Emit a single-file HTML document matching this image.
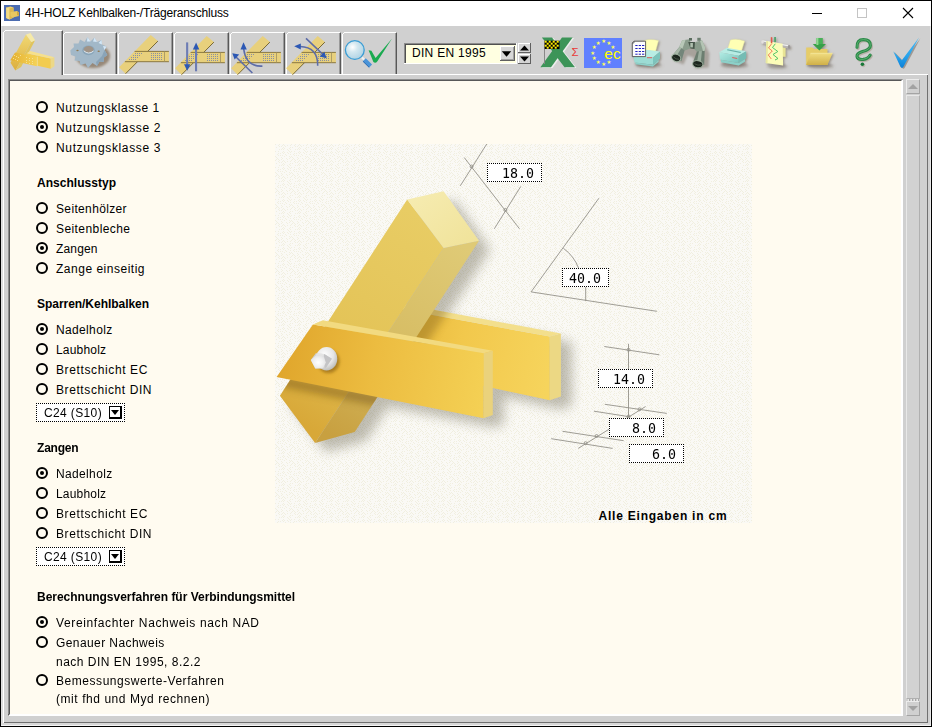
<!DOCTYPE html>
<html lang="de">
<head>
<meta charset="utf-8">
<title>4H-HOLZ Kehlbalken-/Trägeranschluss</title>
<style>
html,body{margin:0;padding:0;}
body{width:932px;height:727px;position:relative;overflow:hidden;background:#d0d0d0;font-family:"Liberation Sans",sans-serif;font-size:12px;color:#000;}
.abs{position:absolute;}
#frame{position:absolute;left:0;top:0;width:930px;height:725px;border:1px solid #000;border-right:1px solid #000;border-bottom:1px solid #000;pointer-events:none;z-index:50;}
#title{position:absolute;left:1px;top:1px;width:930px;height:25px;background:#fff;}
#title .txt{position:absolute;left:24px;top:4px;font-size:12px;line-height:16px;letter-spacing:-0.17px;white-space:nowrap;color:#000;}
/* tab control */
.tab{position:absolute;top:32px;height:41px;width:54px;border-left:1px solid #fff;border-top:1px solid #fff;border-right:1px solid #585858;box-sizing:content-box;padding-right:1px;}
.tab::after{content:"";position:absolute;right:0;top:0;width:1px;height:100%;background:#9a9a9a;}
.tab::before{content:"";position:absolute;left:-1px;top:-1px;width:1px;height:1px;background:#d0d0d0;box-shadow:1px 0 #d0d0d0,0 1px #d0d0d0,1px 1px #fff;}
.tab.act{top:30px;height:44px;left:3px;width:57px;background:#d0d0d0;z-index:3;}
#pagetop{position:absolute;left:63px;top:74px;width:865px;height:1px;background:#fff;}
#pageleft{position:absolute;left:3px;top:74px;width:1px;height:649px;background:#fff;}
#pageright{position:absolute;left:927px;top:75px;width:1px;height:648px;background:#707070;}
#pagebottom{position:absolute;left:4px;top:722px;width:924px;height:1px;background:#707070;}
#hl-r{position:absolute;left:930px;top:26px;width:1px;height:700px;background:#e8e8e8;}
#hl-b{position:absolute;left:1px;top:725px;width:930px;height:1px;background:#f4f4f4;}
#hl-l{position:absolute;left:1px;top:26px;width:1px;height:699px;background:#dedede;}
/* content */
#content{position:absolute;left:8px;top:79px;width:891px;height:633px;background:#fffbf0;border-top:2px solid #585858;border-left:2px solid #585858;border-right:2px solid #fff;border-bottom:2px solid #fff;box-sizing:content-box;}
#content::before{content:"";position:absolute;left:-2px;top:-2px;width:894px;height:1px;background:#8c8c8c;}
#content::after{content:"";position:absolute;left:-2px;top:-2px;width:1px;height:635px;background:#8c8c8c;}
.t{position:absolute;left:56px;white-space:nowrap;font-size:12px;line-height:14px;letter-spacing:0.9px;color:#000;}
.h{position:absolute;left:37px;white-space:nowrap;font-size:12px;line-height:14px;font-weight:bold;letter-spacing:0.15px;color:#000;}
.r{position:absolute;left:36px;width:8px;height:8px;border:2px solid #000;border-radius:50%;box-sizing:content-box;}
.r.on::after{content:"";position:absolute;left:2px;top:2px;width:4px;height:4px;border-radius:50%;background:#000;}

.dd{position:absolute;left:36px;width:87px;height:17px;border:1px dotted #000;background:#fff;box-sizing:content-box;}
.dd span{position:absolute;left:6.5px;top:1.5px;font-size:12px;line-height:14px;letter-spacing:0.37px;white-space:nowrap;will-change:transform;}
.dd i{position:absolute;left:72px;top:2px;width:10px;height:10px;border:1px solid #000;border-right-width:2px;border-bottom-width:2px;background:#fff;}
.dd i::after{content:"";position:absolute;left:1px;top:3px;border-left:4px solid transparent;border-right:4px solid transparent;border-top:5px solid #000;}
.inp{position:absolute;height:17px;border:1px dotted #000;background:#fff;box-sizing:content-box;font-family:"DejaVu Sans Mono","Liberation Mono",monospace;font-size:13.3px;line-height:17px;text-align:right;white-space:nowrap;}
.inp span{position:absolute;right:7px;top:0.5px;will-change:transform;}

.sbb{position:absolute;left:906px;width:12px;height:13px;background:#d0d0d0;border-top:1px solid #ececec;border-left:1px solid #ececec;border-right:1px solid #a4a4a4;border-bottom:1px solid #a4a4a4;}
.sbb i{position:absolute;left:1px;width:0;height:0;border-left:5px solid transparent;border-right:5px solid transparent;}
#sbt{position:absolute;left:906px;top:95px;width:12px;height:602px;background:#d2d2d2;border-left:1px solid #e8e8e8;border-right:1px solid #b0b0b0;border-top:1px solid #e8e8e8;border-bottom:1px solid #b0b0b0;}
</style>
</head>
<body>
<div id="title">
<svg class="abs" style="left:3px;top:4px" width="16" height="16" viewBox="0 0 16 16"><rect width="16" height="16" fill="#4c6cb0"/><polygon points="2.2,2.5 6.5,1.5 9.5,2.5 9.5,12.5 5.5,14.5 2.2,13" fill="#ecd070"/><polygon points="2.2,2.5 5.5,3.5 5.5,14.5 2.2,13" fill="#f4dc84"/><polygon points="5.5,3.5 9.5,2.5 9.5,12.5 5.5,14.5" fill="#dcb850"/><polygon points="6.5,7 13,6 15,7.5 15,11 8.5,12.5 6.5,11" fill="#e8c860"/><polygon points="13,6 15,7.5 15,11 13,10" fill="#d0a840"/></svg>
  <svg class="abs" style="left:780px;top:0px" width="150" height="25" viewBox="781 1 150 25"><path d="M812 13.5 H822" stroke="#000" stroke-width="1"/><rect x="857.5" y="8.5" width="9" height="9" fill="none" stroke="#c4c4c4" stroke-width="1"/><path d="M903 8 L913 18 M913 8 L903 18" stroke="#000" stroke-width="1.1"/></svg>
  <div class="txt">4H-HOLZ Kehlbalken-/Trägeranschluss</div>
</div>
<div id="toolbar"></div>
<div id="pagetop"></div><div id="pageleft"></div><div id="pageright"></div><div id="pagebottom"></div>
<div class="abs" style="left:2px;top:32px;width:1px;height:691px;background:#dcdcdc"></div><div class="abs" style="left:1px;top:723px;width:929px;height:2px;background:#d8d8d8"></div><div id="hl-r"></div><div id="hl-b"></div><div id="hl-l"></div>
<div class="tab act"></div>
<div class="tab" style="left:63px;width:51px"></div>
<div class="tab" style="left:118px;width:52px"></div>
<div class="tab" style="left:174px;width:52px"></div>
<div class="tab" style="left:230px;width:52px"></div>
<div class="tab" style="left:286px;width:52px"></div>
<div class="tab" style="left:342px;width:52px"></div>
<div id="content"></div>
<div class="sbb" style="top:79px"><i style="top:3.6px;border-bottom:5.6px solid #a2a2a2"></i></div>
<div id="sbt"></div>
<svg class="abs" style="left:906px;top:699px" width="14" height="2" viewBox="0 0 14 2"><g fill="#e8e8e8"><rect x="2" y="0" width="1" height="2"/><rect x="5" y="0" width="1" height="2"/><rect x="8" y="0" width="1" height="2"/><rect x="11" y="0" width="1" height="2"/></g><g fill="#a8a8a8"><rect x="3" y="0" width="1" height="2"/><rect x="6" y="0" width="1" height="2"/><rect x="9" y="0" width="1" height="2"/><rect x="12" y="0" width="1" height="2"/></g></svg>
<div class="sbb" style="top:701px"><i style="top:4px;border-top:5.6px solid #a2a2a2"></i></div>
<div id="panel" class="abs" style="left:0;top:0;width:932px;height:727px;">
<!--PANEL-->
<div class="r" style="top:101px"></div><div class="t" style="top:101px;letter-spacing:0.57px">Nutzungsklasse 1</div>
<div class="r on" style="top:121px"></div><div class="t" style="top:121px;letter-spacing:0.65px">Nutzungsklasse 2</div>
<div class="r" style="top:141px"></div><div class="t" style="top:141px;letter-spacing:0.65px">Nutzungsklasse 3</div>
<div class="h" style="top:176px;letter-spacing:0.04px">Anschlusstyp</div>
<div class="r" style="top:202px"></div><div class="t" style="top:202px;letter-spacing:0.35px">Seitenhölzer</div>
<div class="r" style="top:222px"></div><div class="t" style="top:222px;letter-spacing:0.42px">Seitenbleche</div>
<div class="r on" style="top:242px"></div><div class="t" style="top:242px;letter-spacing:0.16px">Zangen</div>
<div class="r" style="top:262px"></div><div class="t" style="top:262px;letter-spacing:0.51px">Zange einseitig</div>
<div class="h" style="top:297px;letter-spacing:-0.04px">Sparren/Kehlbalken</div>
<div class="r on" style="top:323px"></div><div class="t" style="top:323px;letter-spacing:0.35px">Nadelholz</div>
<div class="r" style="top:343px"></div><div class="t" style="top:343px;letter-spacing:0.2px">Laubholz</div>
<div class="r" style="top:363px"></div><div class="t" style="top:363px;letter-spacing:0.62px">Brettschicht EC</div>
<div class="r" style="top:383px"></div><div class="t" style="top:383px;letter-spacing:0.59px">Brettschicht DIN</div>
<div class="dd" style="top:403px"><span>C24 (S10)</span><i></i></div>
<div class="h" style="top:441px;letter-spacing:-0.2px">Zangen</div>
<div class="r on" style="top:467px"></div><div class="t" style="top:467px;letter-spacing:0.35px">Nadelholz</div>
<div class="r" style="top:487px"></div><div class="t" style="top:487px;letter-spacing:0.2px">Laubholz</div>
<div class="r" style="top:507px"></div><div class="t" style="top:507px;letter-spacing:0.62px">Brettschicht EC</div>
<div class="r" style="top:527px"></div><div class="t" style="top:527px;letter-spacing:0.59px">Brettschicht DIN</div>
<div class="dd" style="top:547px"><span>C24 (S10)</span><i></i></div>
<div class="h" style="top:590px;letter-spacing:-0.015px">Berechnungsverfahren für Verbindungsmittel</div>
<div class="r on" style="top:616px"></div><div class="t" style="top:616px;letter-spacing:0.63px">Vereinfachter Nachweis nach NAD</div>
<div class="r" style="top:636px"></div><div class="t" style="top:636px;letter-spacing:0.41px">Genauer Nachweis</div>
<div class="t" style="top:655px;letter-spacing:0.5px">nach DIN EN 1995, 8.2.2</div>
<div class="r" style="top:674px"></div><div class="t" style="top:674px;letter-spacing:0.55px">Bemessungswerte-Verfahren</div>
<div class="t" style="top:692px;letter-spacing:0.56px">(mit fhd und Myd rechnen)</div>
<!--/PANEL-->
<!--PIC-->
<svg id="pic" class="abs" style="left:275px;top:144px" width="477" height="379" viewBox="275 144 477 379">
<defs>
<pattern id="dith" width="16" height="16" patternUnits="userSpaceOnUse"><rect width="16" height="16" fill="#faf9f5"/><path d="M0 6h1v1h-1zM0 9h1v1h-1zM1 4h1v1h-1zM1 7h1v1h-1zM1 12h1v1h-1zM1 14h1v1h-1zM2 1h1v1h-1zM2 3h1v1h-1zM2 5h1v1h-1zM2 8h1v1h-1zM2 10h1v1h-1zM2 13h1v1h-1zM3 0h1v1h-1zM3 7h1v1h-1zM3 12h1v1h-1zM4 3h1v1h-1zM4 13h1v1h-1zM4 15h1v1h-1zM5 10h1v1h-1zM5 14h1v1h-1zM6 1h1v1h-1zM6 7h1v1h-1zM6 9h1v1h-1zM6 11h1v1h-1zM6 15h1v1h-1zM7 0h1v1h-1zM7 2h1v1h-1zM7 5h1v1h-1zM8 9h1v1h-1zM8 11h1v1h-1zM9 2h1v1h-1zM9 5h1v1h-1zM9 13h1v1h-1zM9 15h1v1h-1zM10 1h1v1h-1zM10 4h1v1h-1zM10 8h1v1h-1zM10 11h1v1h-1zM10 14h1v1h-1zM11 0h1v1h-1zM11 3h1v1h-1zM11 5h1v1h-1zM11 7h1v1h-1zM11 9h1v1h-1zM12 1h1v1h-1zM12 4h1v1h-1zM12 8h1v1h-1zM12 12h1v1h-1zM13 2h1v1h-1zM13 10h1v1h-1zM14 11h1v1h-1zM14 14h1v1h-1zM15 1h1v1h-1zM15 5h1v1h-1zM15 8h1v1h-1zM15 15h1v1h-1z" fill="#f1efe0"/></pattern>
<filter id="blur6" x="-30%" y="-30%" width="160%" height="160%"><feGaussianBlur stdDeviation="6"/></filter>
<filter id="blur4" x="-30%" y="-30%" width="160%" height="160%"><feGaussianBlur stdDeviation="4"/></filter>
<linearGradient id="gCap" x1="0" y1="0" x2="1" y2="1"><stop offset="0" stop-color="#f6ecb2"/><stop offset="1" stop-color="#f0e298"/></linearGradient>
<linearGradient id="gRL" gradientUnits="userSpaceOnUse" x1="425" y1="220" x2="297" y2="420"><stop offset="0" stop-color="#e8cc64"/><stop offset="0.55" stop-color="#e4c458"/><stop offset="1" stop-color="#d8a838"/></linearGradient>
<linearGradient id="gRR" gradientUnits="userSpaceOnUse" x1="461" y1="244" x2="335" y2="438"><stop offset="0" stop-color="#dfca76"/><stop offset="0.5" stop-color="#d7bd64"/><stop offset="1" stop-color="#c8a040"/></linearGradient>
<linearGradient id="gFP" gradientUnits="userSpaceOnUse" x1="280" y1="360" x2="484" y2="390"><stop offset="0" stop-color="#e0a62c"/><stop offset="0.45" stop-color="#ecbc40"/><stop offset="1" stop-color="#f4d054"/></linearGradient>
<linearGradient id="gBP" gradientUnits="userSpaceOnUse" x1="400" y1="340" x2="550" y2="370"><stop offset="0" stop-color="#e8b83c"/><stop offset="0.4" stop-color="#f2c84c"/><stop offset="1" stop-color="#f6d45c"/></linearGradient>
<filter id="blur2" x="-30%" y="-30%" width="160%" height="160%"><feGaussianBlur stdDeviation="1.8"/></filter>
<radialGradient id="gNut" cx="0.5" cy="0.55" r="0.6"><stop offset="0" stop-color="#ffffff"/><stop offset="0.5" stop-color="#f2f2f2"/><stop offset="1" stop-color="#dedee0"/></radialGradient>
<radialGradient id="gBolt" cx="0.4" cy="0.35" r="0.7"><stop offset="0" stop-color="#ffffff"/><stop offset="0.6" stop-color="#e6e6e6"/><stop offset="1" stop-color="#b8b8b4"/></radialGradient>
</defs>
<rect x="275" y="144" width="477" height="379" fill="url(#dith)"/>
<!-- shadows -->
<clipPath id="cpPic"><rect x="275" y="144" width="477" height="379"/></clipPath>
<clipPath id="cpRaf"><polygon points="407.2,199.5 443.6,191.2 479,240.7 354.7,432 315.1,443 279.9,395.7"/></clipPath>
<clipPath id="cpBP"><polygon points="400,303.5 560.9,333.4 560.9,396.6 549.8,400.3 400,367.7"/></clipPath>
<g clip-path="url(#cpPic)"><g filter="url(#blur6)" opacity="0.36" fill="#58523e" transform="translate(11,9)">
<polygon points="407.2,199.5 443.6,191.2 479,240.7 354.7,432 315.1,443 279.9,395.7"/>
<polygon points="420,307 560.9,333.4 560.9,396.6 549.8,400.3 420,372"/>
<polygon points="330,330 492.8,350.8 492.8,415.1 483.7,418.3 300,383"/>
</g></g>
<!-- back plank -->
<polygon points="400,309 549.8,336.6 549.8,400.3 400,367.7" fill="url(#gBP)"/>
<polygon points="400,303.5 560.9,333.4 549.8,336.6 400,309" fill="#f3df8c"/>
<polygon points="549.8,336.6 560.9,333.4 560.9,396.6 549.8,400.3" fill="#ecd884"/>
<!-- shadow of rafter on back plank -->
<g clip-path="url(#cpBP)"><polygon points="443.6,248 479,240.7 354.7,432 315.1,443" fill="#7a5a14" opacity="0.4" filter="url(#blur4)" transform="translate(12,4)"/></g>
<!-- rafter -->
<polygon points="407.2,199.5 443.6,248 315.1,443 279.9,395.7" fill="url(#gRL)"/>
<polygon points="443.6,248 479,240.7 354.7,432 315.1,443" fill="url(#gRR)"/>
<polygon points="407.2,199.5 443.6,191.2 479,240.7 443.6,248" fill="url(#gCap)"/>
<!-- front plank shadow on rafter -->
<g clip-path="url(#cpRaf)"><polygon points="276.6,367 483.7,408.3 483.7,418.3 276.6,377" fill="#6a4a0c" opacity="0.5" filter="url(#blur4)" transform="translate(4,9)"/></g>
<!-- front plank -->
<polygon points="312.9,324.6 483.7,353.2 483.7,418.3 276.6,377" fill="url(#gFP)"/>
<polygon points="312.9,324.6 322.8,320.2 492.8,350.8 483.7,353.2" fill="#f2da80"/>
<polygon points="483.7,353.2 492.8,350.8 492.8,415.1 483.7,418.3" fill="#ead27c"/>
<!-- bolt -->
<ellipse cx="328.5" cy="361.5" rx="11" ry="11.5" fill="#7a5208" opacity="0.55" filter="url(#blur2)"/>
<ellipse cx="326.6" cy="358.8" rx="10.7" ry="11.7" fill="url(#gBolt)"/>
<polygon points="310.8,360.1 315.6,353.6 324.2,353.9 331.8,358.8 325.6,368.2 315.3,368.6" fill="#cfcfcf"/>
<polygon points="324.2,353.9 331.8,358.8 325.6,368.2 323.5,361.5" fill="#c4c4c6"/>
<polygon points="315.6,353.6 324.2,353.9 323.5,356.5 316.8,355.6" fill="#e4e4e4"/>
<polygon points="310.8,360.1 316.2,355 323.8,356.2 325.8,362.5 323.2,368.3 315.3,368.6" fill="url(#gNut)"/>
<!-- dimension lines -->
<g stroke="#94928a" stroke-width="0.9" fill="none">
<line x1="460.3" y1="185.8" x2="486.8" y2="143.9"/>
<line x1="464.2" y1="157.5" x2="519.5" y2="228.8"/>
<line x1="494.3" y1="228.8" x2="520.8" y2="186.4"/>
<circle cx="471.6" cy="166.5" r="1.5"/><circle cx="505.4" cy="210" r="1.5"/>
<line x1="531.1" y1="291.9" x2="598.9" y2="198.2"/>
<line x1="531.1" y1="291.9" x2="656.8" y2="311.3"/>
<path d="M563.3 248.2 Q574 256 578.5 268"/>
<line x1="585.7" y1="287" x2="585.7" y2="301"/>
<line x1="604.3" y1="346.5" x2="659.4" y2="354.8"/>
<line x1="628.5" y1="343.8" x2="628.5" y2="416.7"/>
<line x1="604.9" y1="404.3" x2="666.8" y2="413.4"/>
<line x1="593.9" y1="411.2" x2="629.1" y2="416.7"/>
<line x1="562.5" y1="431.3" x2="623.6" y2="440.7"/>
<line x1="551.2" y1="438.7" x2="612.6" y2="448.4"/>
<line x1="578.2" y1="448.4" x2="645.6" y2="406.5"/>
<circle cx="628.5" cy="349.8" r="1.5"/><circle cx="628.5" cy="416.5" r="1.5"/><circle cx="639.5" cy="409.3" r="1.5"/><circle cx="596.6" cy="436" r="1.5"/><circle cx="585.6" cy="443.2" r="1.5"/>
</g>
<text x="598.5" y="520" font-family="Liberation Sans, sans-serif" font-weight="bold" font-size="12px" letter-spacing="0.78" fill="#000">Alle Eingaben in cm</text>
</svg>
<div class="inp" style="left:487px;top:163px;width:53px"><span>18.0</span></div>
<div class="inp" style="left:562px;top:268px;width:45px"><span>40.0</span></div>
<div class="inp" style="left:598px;top:369px;width:53px"><span>14.0</span></div>
<div class="inp" style="left:609px;top:418px;width:53px"><span>8.0</span></div>
<div class="inp" style="left:629px;top:444px;width:53px"><span>6.0</span></div>
<!--/PIC-->
</div>
<!--TB-->
<svg id="tb" class="abs" style="left:0;top:26px;z-index:5" width="932" height="52" viewBox="0 26 932 52">
<defs>
<linearGradient id="tRL" x1="0" y1="0" x2="0" y2="1"><stop offset="0" stop-color="#f0d874"/><stop offset="1" stop-color="#dcae3c"/></linearGradient>
<linearGradient id="tFP" x1="0" y1="0" x2="1" y2="0"><stop offset="0" stop-color="#e4b030"/><stop offset="1" stop-color="#f4d258"/></linearGradient>
<radialGradient id="gLens" cx="0.38" cy="0.35" r="0.75"><stop offset="0" stop-color="#ffffff"/><stop offset="0.35" stop-color="#d4e8f0"/><stop offset="1" stop-color="#a8cfe2"/></radialGradient>
<linearGradient id="gChk" x1="0" y1="0" x2="0" y2="1"><stop offset="0" stop-color="#48b8f4"/><stop offset="0.6" stop-color="#28a4ec"/><stop offset="1" stop-color="#0c80d8"/></linearGradient>
<linearGradient id="gTeal" x1="0" y1="0" x2="1" y2="1"><stop offset="0" stop-color="#b4ece4"/><stop offset="1" stop-color="#78c4bc"/></linearGradient>
<linearGradient id="gFold" x1="0" y1="0" x2="0" y2="1"><stop offset="0" stop-color="#f0dc80"/><stop offset="1" stop-color="#d0b048"/></linearGradient>
<filter id="ds" x="-30%" y="-30%" width="170%" height="170%"><feDropShadow dx="1.2" dy="1.2" stdDeviation="0.9" flood-color="#685848" flood-opacity="0.55"/></filter>
<filter id="tblur05" x="-30%" y="-30%" width="160%" height="160%"><feGaussianBlur stdDeviation="0.6"/></filter>
<filter id="tblur" x="-30%" y="-30%" width="160%" height="160%"><feGaussianBlur stdDeviation="1.2"/></filter>
<g id="bars">
  <polygon points="1.1,35.2 32.7,2.9 39.9,9.1 7.6,41.7" fill="#e8d07c"/>
  <path d="M39.9 9.1 L7.6 41.7" stroke="#6e5e28" stroke-width="0.9" fill="none"/>
  <polygon points="16.6,19.4 50.9,19.4 50.9,29.7 6.9,29.7" fill="#e8d07c"/>
  <path d="M16.6 19.4 H50.9 M6.9 29.7 H50.9" stroke="#8a7840" stroke-width="1" fill="none"/>
  <path d="M46.5 19.4 V29.7" stroke="#a09060" stroke-width="0.8"/>
  <g fill="#8890a4">
    <rect x="33" y="21" width="1" height="1"/><rect x="35" y="21" width="1" height="1"/><rect x="37" y="21" width="1" height="1"/><rect x="39" y="21" width="1" height="1"/><rect x="41" y="21" width="1" height="1"/><rect x="43" y="21" width="1" height="1"/>
    <rect x="33" y="23" width="1" height="1"/><rect x="35" y="23" width="1" height="1"/><rect x="37" y="23" width="1" height="1"/><rect x="39" y="23" width="1" height="1"/><rect x="41" y="23" width="1" height="1"/><rect x="43" y="23" width="1" height="1"/>
    <rect x="33" y="25" width="1" height="1"/><rect x="35" y="25" width="1" height="1"/><rect x="37" y="25" width="1" height="1"/><rect x="39" y="25" width="1" height="1"/><rect x="41" y="25" width="1" height="1"/><rect x="43" y="25" width="1" height="1"/>
    <rect x="33" y="27" width="1" height="1"/><rect x="35" y="27" width="1" height="1"/><rect x="37" y="27" width="1" height="1"/><rect x="39" y="27" width="1" height="1"/><rect x="41" y="27" width="1" height="1"/><rect x="43" y="27" width="1" height="1"/>
    <rect x="17" y="21" width="1" height="1"/><rect x="19" y="21" width="1" height="1"/><rect x="21" y="21" width="1" height="1"/><rect x="23" y="21" width="1" height="1"/>
    <rect x="15" y="23" width="1" height="1"/><rect x="17" y="23" width="1" height="1"/><rect x="19" y="23" width="1" height="1"/><rect x="21" y="23" width="1" height="1"/>
    <rect x="13" y="25" width="1" height="1"/><rect x="15" y="25" width="1" height="1"/><rect x="17" y="25" width="1" height="1"/><rect x="19" y="25" width="1" height="1"/>
    <rect x="11" y="27" width="1" height="1"/><rect x="13" y="27" width="1" height="1"/><rect x="15" y="27" width="1" height="1"/><rect x="17" y="27" width="1" height="1"/>
  </g>
</g>
</defs>
<!-- tab1 icon: beams -->
<g>
  <polygon points="26,34.5 31.4,42.1 15.4,70.6 10.5,62.7" fill="url(#tRL)"/>
  <polygon points="31.4,42.1 35.1,40.3 21.1,66.9 15.4,70.6" fill="#e0c45c"/>
  <polygon points="26,34.5 30.5,33 35.1,40.3 31.4,42.1" fill="#f6eaa8"/>
  <polygon points="26.6,53.3 50.8,58.5 50.8,68.7 37.5,65.7 26.6,62" fill="#f2cc50"/>
  <polygon points="26.6,53.3 30.2,50.9 54.4,57.2 50.8,58.5" fill="#f6e08c"/>
  <polygon points="50.8,58.5 54.4,57.2 54.4,66.3 50.8,68.7" fill="#ecd888"/>
  <polygon points="15.1,52.4 36.9,56.9 36.9,66.3 10.2,60.3" fill="url(#tFP)"/>
  <polygon points="36.9,56.9 37.9,56.6 37.9,66 36.9,66.3" fill="#f0dc90"/>
  <g fill="#f8e8a0" opacity="0.8"><rect x="14" y="55" width="1" height="1"/><rect x="16" y="56" width="1" height="1"/><rect x="18" y="57" width="1" height="1"/><rect x="13" y="58" width="1" height="1"/><rect x="15" y="59" width="1" height="1"/><rect x="17" y="60" width="1" height="1"/><rect x="20" y="55" width="1" height="1"/>
  <rect x="26" y="57" width="1" height="1"/><rect x="29" y="58" width="1" height="1"/><rect x="32" y="58" width="1" height="1"/><rect x="26" y="60" width="1" height="1"/><rect x="29" y="60" width="1" height="1"/><rect x="32" y="61" width="1" height="1"/><rect x="26" y="62" width="1" height="1"/><rect x="29" y="63" width="1" height="1"/><rect x="32" y="63" width="1" height="1"/></g>
</g>
<!-- tab2 icon: toothed plate -->
<g>
  <ellipse cx="93" cy="56" rx="17" ry="12" fill="#6a5030" opacity="0.55" filter="url(#tblur)"/>
  <polygon fill="#a2b8c8" points="70.3,50.5 74,47 73.5,43.5 78.5,43.5 80,39.5 84.5,42 87.5,37 90.5,41.5 94.5,37.5 97,42 101.5,40 102,44.5 106.5,46.5 104.5,50 107.4,55 104,57.5 103.5,62 99.5,61.5 97,66 92.5,63 88,67.9 85.5,63.5 80.5,65 79.5,61 74.5,60.5 75.5,56.5 71,55"/>
  <path d="M94.5 37.5 L97 42 L93 41.5 Z M101.5 40 L102 44.5 L98.5 43 Z M106.5 46.5 L104.5 50 L103 46 Z M87.5 37 L90.5 41.5 L87 41.5Z" fill="#d4e8f8"/>
  <path d="M104.5 50 L107.4 55 L104 57.5 L103.5 62 L99.5 61.5 L97 66 L96 62 L102 56 Z" fill="#8aa4b8"/>
  <ellipse cx="88.5" cy="50.3" rx="6.2" ry="4.9" fill="#8aa6ba"/>
  <ellipse cx="88.6" cy="49.7" rx="5" ry="3.6" fill="#a09488"/><path d="M83.8 50.8 Q88.5 55.2 93.6 51" stroke="#dcecf8" stroke-width="1" fill="none"/>
  <ellipse cx="77.5" cy="50.5" rx="1.2" ry="0.8" fill="#907850"/><ellipse cx="98.7" cy="51.3" rx="1.2" ry="0.8" fill="#907850"/>
</g>
<!-- tab3..6 bars -->
<use href="#bars" x="118" y="32"/>
<use href="#bars" x="174" y="33"/>
<use href="#bars" x="230" y="33"/>
<use href="#bars" x="285" y="33"/>
<!-- tab4 arrows -->
<g>
  <rect x="186.1" y="42.4" width="2.1" height="23" fill="#6c7cb4"/><polygon points="184,64.2 190.4,64.2 187.2,70.8" fill="#2c58b4"/>
  <rect x="195" y="49" width="2.1" height="22.3" fill="#6c7cb4"/><polygon points="192.9,49.4 199.3,49.4 196.1,42.6" fill="#2c58b4"/>
</g>
<!-- tab5 arrows -->
<g fill="none" stroke="#5c6ca8" stroke-width="1.6">
  <path d="M252.4 73 L236 57"/>
  <path d="M262.4 66.1 Q246 67 243.7 49"/>
</g>
<polygon points="232.3,53.2 239.2,54.6 234.6,59.4" fill="#2c58b4"/>
<polygon points="243.5,42.2 246.8,49.5 240.5,49.5" fill="#2c58b4"/>
<!-- tab6 arrows -->
<g fill="none" stroke="#5c6ca8" stroke-width="1.6">
  <path d="M306 38.3 L323 54.5"/>
  <path d="M317.7 65.8 Q318 47 300 46.5"/>
</g>
<polygon points="326.6,58.2 319.6,56.6 324.4,51.8" fill="#2c58b4"/>
<polygon points="294.2,46.2 300.8,43.4 300.8,49.6" fill="#2c58b4"/>
<!-- tab7 magnifier + check -->
<g>
  <path d="M361.8 57.3 L364.5 60" stroke="#f0f0f0" stroke-width="2.2"/>
  <path d="M364.3 59.8 L370.6 66" stroke="#4a94d8" stroke-width="4.2"/>
  <path d="M362.9 61.2 L369.2 67.4" stroke="#2868b0" stroke-width="1"/>
  <circle cx="354.8" cy="50" r="9.4" fill="url(#gLens)" stroke="#3a9cd4" stroke-width="1.3"/>
  <path d="M368.6 50.2 L371.4 50.8 L375.6 58 L391.9 38.8 L377.4 61.2 Q375.4 64 373.4 62 Z" fill="#1aaa50"/>
</g>
<!-- combo -->
<g>
  <rect x="404" y="43" width="113" height="21" fill="#fff"/>
  <rect x="404" y="43" width="112" height="20" fill="#8c8c8c"/>
  <rect x="405" y="44" width="111" height="19" fill="#505050"/>
  <rect x="406" y="45" width="110" height="18" fill="#ffffe1"/>
  <rect x="500" y="46" width="15" height="15" fill="#606060"/>
  <rect x="500" y="46" width="14" height="14" fill="#fff"/>
  <rect x="501" y="47" width="13" height="13" fill="#a0a0a0"/>
  <rect x="501" y="47" width="12" height="12" fill="#d8d8d8"/>
  <polygon points="501.8,51.2 511.2,51.2 506.5,56.8" fill="#000"/>
  <text x="412" y="57" font-family="Liberation Sans, sans-serif" font-size="12px" letter-spacing="0.29" fill="#000">DIN EN 1995</text>
  <rect x="518" y="43" width="13" height="10" fill="#606060"/><rect x="518" y="43" width="12" height="9" fill="#fff"/><rect x="519" y="44" width="11" height="8" fill="#d4d4d4"/>
  <rect x="518" y="54" width="13" height="10" fill="#606060"/><rect x="518" y="54" width="12" height="9" fill="#fff"/><rect x="519" y="55" width="11" height="8" fill="#d4d4d4"/>
  <polygon points="520,50.5 529,50.5 524.5,45.5" fill="#000"/>
  <polygon points="520,56.5 529,56.5 524.5,61.5" fill="#000"/>
</g>
<!-- X icon -->
<g>
  <path d="M541.9 37.4 L552 37.4 L575 67.2 L564.5 67.2 Z M562 37.4 L572.6 37.4 L551 67.2 L540.4 67.2 Z" fill="#f2f2f2" opacity="0.85" transform="translate(1.5 0.7)"/>
  <path d="M541.9 37.4 L552 37.4 L575 67.2 L564.5 67.2 Z" fill="#3c9458"/>
  <path d="M562 37.4 L572.6 37.4 L551 67.2 L540.4 67.2 Z" fill="#3c9458"/>
  <rect x="544" y="40" width="1" height="24" fill="#888"/>
  <rect x="544.7" y="40.7" width="14.8" height="8.3" fill="#000"/>
  <g fill="#ffee00">
   <rect x="544.7" y="40.7" width="2" height="2"/><rect x="548.7" y="40.7" width="2" height="2"/><rect x="552.7" y="40.7" width="2" height="2"/><rect x="556.7" y="40.7" width="2" height="2"/>
   <rect x="546.7" y="42.7" width="2" height="2"/><rect x="550.7" y="42.7" width="2" height="2"/><rect x="554.7" y="42.7" width="2" height="2"/>
   <rect x="544.7" y="44.7" width="2" height="2"/><rect x="548.7" y="44.7" width="2" height="2"/><rect x="552.7" y="44.7" width="2" height="2"/><rect x="556.7" y="44.7" width="2" height="2"/>
   <rect x="546.7" y="46.7" width="2" height="2"/><rect x="550.7" y="46.7" width="2" height="2"/><rect x="554.7" y="46.7" width="2" height="2"/>
  </g>
  <text x="571.5" y="56" font-family="Liberation Sans, sans-serif" font-size="11.5px" fill="#e83838">Σ</text>
</g>
<!-- EC icon -->
<g>
  <rect x="584" y="38" width="38" height="30" fill="#6080ff"/>
  <g fill="#ffff60" font-family="DejaVu Sans, sans-serif" font-size="5.4px" text-anchor="middle">
    <text x="603.6" y="43.4">★</text><text x="609" y="44.9">★</text><text x="613" y="48.9">★</text>
    <text x="609" y="64">★</text><text x="603.6" y="65.5">★</text><text x="598.2" y="64">★</text>
    <text x="594.2" y="60">★</text><text x="592.7" y="54.5">★</text><text x="594.2" y="49">★</text><text x="598.2" y="44.9">★</text>
  </g>
  <text x="604.3" y="59.2" font-family="Liberation Sans, sans-serif" font-size="15.5px" fill="#ffff00">ec</text>
</g>
<!-- print preview -->
<g filter="url(#ds)">
  <ellipse cx="648" cy="64.5" rx="13" ry="2.5" fill="#706860" opacity="0.45" filter="url(#tblur)"/>
  <path d="M643.2 50 L644.5 40.5 Q650 38.5 658.5 40.6 L655.5 51.5 Z" fill="#ffffb4" stroke="#d8d8a0" stroke-width="0.4"/>
  <polygon points="633.5,56 646.5,49.7 660,51.5 653,57.5" fill="#b8ece4"/>
  <polygon points="633.5,56 653,57.5 653,64.8 634.5,62.5" fill="#9cdcd4"/>
  <polygon points="653,57.5 660,51.5 660,58.5 653,64.8" fill="#7cc4bc"/>
  <polygon points="635.5,62.6 653,64.8 658.5,60 658.5,61.8 653,66.4 635.5,64.2" fill="#8cd0c8"/>
  <rect x="647" y="57.2" width="5" height="1" fill="#e06060"/>
  <path d="M634 41.2 H645.6 V56.6 H632.3 V43 Z" fill="#fcfcfc" stroke="#505050" stroke-width="0.9"/>
  <path d="M632.3 43 H634 V41.2" fill="none" stroke="#505050" stroke-width="0.7"/>
  <g fill="#2020c0"><rect x="635.3" y="45" width="2.3" height="1"/><rect x="638.7" y="45" width="2.3" height="1"/><rect x="642" y="45" width="2.3" height="1"/><rect x="635.3" y="48" width="2.3" height="1"/><rect x="638.7" y="48" width="2.3" height="1"/><rect x="642" y="48" width="2.3" height="1"/><rect x="635.3" y="51" width="2.3" height="1"/><rect x="638.7" y="51" width="2.3" height="1"/><rect x="642" y="51" width="2.3" height="1"/><rect x="635.3" y="53.7" width="2.3" height="1"/><rect x="638.7" y="53.7" width="2.3" height="1"/><rect x="642" y="53.7" width="2.3" height="1"/></g>
</g>
<!-- binoculars -->
<g>
  <path d="M683 43 L703 42 L708 52 L707 66 L694 67 L692 56 L686 54 L682 63 L672 59 L679 47 Z" fill="#807468" opacity="0.5" filter="url(#tblur)" transform="translate(1.5,1.5)"/>
  <polygon points="679.4,46.9 684.9,49.6 681.4,61.2 671.5,56.6" fill="#74867a"/>
  <polygon points="679.4,46.9 681.5,47.8 675,58.6 671.5,56.6" fill="#a8b8a8"/>
  <polygon points="682.2,40.3 689.9,39.2 691.5,48 684.9,50.4 679.2,47" fill="#8a9c8c"/>
  <polygon points="682.2,40.3 685.5,39.9 682.5,48.6 679.2,47" fill="#b8c8b8"/>
  <polygon points="697,51.3 704.7,50.2 704.2,65 692.4,63.9" fill="#6c7e70"/>
  <polygon points="699,51 702,50.6 700.5,64.6 696.5,64.2" fill="#9cae9e"/>
  <polygon points="695.4,41.9 702,40.3 705.3,47.4 704.7,50.7 696.5,51.5 693.7,48.5" fill="#8a9c8c"/>
  <polygon points="700,40.8 702,40.3 705.3,47.4 704.7,50.7 703,50.9" fill="#b4c4b4"/>
  <polygon points="688.2,41.9 695,42 694.5,49 690.5,48.6" fill="#46564a"/>
  <rect x="690.3" y="43" width="2.6" height="4.4" fill="#b0c0b0"/>
  <rect x="689" y="38" width="3" height="2.6" fill="#5a6c5e"/><rect x="697.3" y="37.8" width="3.4" height="3" fill="#6a7c6e"/>
  <ellipse cx="676.2" cy="57.9" rx="4.7" ry="3.6" transform="rotate(24 676.2 57.9)" fill="#1c261e" stroke="#a4b6a4" stroke-width="1"/>
  <ellipse cx="697.8" cy="64.2" rx="5.2" ry="3.5" transform="rotate(8 697.8 64.2)" fill="#1c261e" stroke="#a4b6a4" stroke-width="1"/>
  <path d="M673.5 57 Q676 59.5 679 59.3" stroke="#50604f" stroke-width="0.8" fill="none"/>
  <path d="M694.5 63.8 Q698 66 701.5 64.8" stroke="#50604f" stroke-width="0.8" fill="none"/>
</g>
<!-- printer -->
<g filter="url(#ds)">
  <ellipse cx="734" cy="64.8" rx="13.5" ry="2.5" fill="#706860" opacity="0.45" filter="url(#tblur)"/>
  <path d="M727.6 49 L730.3 40 Q736 38 744.6 41 L741.2 52 Z" fill="#ffffb4" stroke="#d8d8a0" stroke-width="0.4"/>
  <polygon points="719.4,52.2 726.8,47.8 746.1,51.2 738.7,55.7" fill="#b8ece4"/>
  <polygon points="727.5,49.3 741.3,51.9 740.3,53 727,50.2" fill="#68b0a8"/>
  <polygon points="719.4,52.2 738.7,55.7 738.7,63.1 719.9,59.6" fill="url(#gTeal)"/>
  <polygon points="738.7,55.7 746.1,51.2 746.1,58.6 738.7,63.1" fill="#74bcb4"/>
  <polygon points="721,59.8 738.7,63.1 745,59.3 745,61.5 738.7,65.6 721,62.2" fill="#8cd0c8"/>
  <rect x="732.3" y="57" width="5" height="1" transform="rotate(10 732 57)" fill="#e06060"/>
</g>
<!-- plot -->
<g filter="url(#ds)">
  <ellipse cx="777" cy="66" rx="10" ry="2" fill="#706860" opacity="0.4" filter="url(#tblur)"/>
  <path d="M762.5 40.3 L789 45.2 L789 48.6 L762.5 43.7 Z" fill="#b8b4b4"/>
  <path d="M762.5 40.3 L789 45.2 L789 46.4 L762.5 41.5 Z" fill="#f0f0f0"/>
  <ellipse cx="762.5" cy="42" rx="1.3" ry="1.8" fill="#e4e0e0"/><ellipse cx="789" cy="46.9" rx="1.3" ry="1.8" fill="#989494"/>
  <polygon points="780,47 785.5,48 785.5,56.8 780,56.5" fill="#e8e494"/>
  <polygon points="766.3,40.9 782.6,43.8 783.1,65.5 765.8,63.1" fill="#fcfcb8"/>
  <polygon points="766.3,40.9 768,41.2 767.5,63.4 765.8,63.1" fill="#e8e8a0"/>
  <rect x="770.8" y="37.2" width="1.5" height="6" fill="#e05848"/><rect x="774.3" y="37" width="1.5" height="5.2" fill="#38a060"/>
  <path d="M771.8 43.5 L768.5 48 L772.3 51 L768.3 55 L771.3 59" fill="none" stroke="#f07050" stroke-width="0.9"/>
  <path d="M775.3 43.8 L772.5 47.5 L777.8 51.5 L773 54.5 L778 58.5 L775 60" fill="none" stroke="#40c060" stroke-width="0.9"/>
</g>
<!-- folder -->
<g filter="url(#ds)">
  <ellipse cx="820" cy="65.5" rx="13" ry="2" fill="#706860" opacity="0.45" filter="url(#tblur)"/>
  <path d="M806.2 47.5 L812.5 47.5 L814 49 L827.4 49 L827.4 65 L806.2 65 Z" fill="#e6cc68"/>
  <polygon points="813,50.4 825.9,50.4 819.4,44" fill="#e8f4e0" opacity="0"/>
  <rect x="816.4" y="38" width="6.4" height="7" fill="#48b058"/>
  <polygon points="812.8,44 826,44 819.4,50.6" fill="#38a048"/>
  <rect x="816.4" y="38" width="2" height="7" fill="#90d890"/>
  <polygon points="810.5,53.3 832.5,53.3 827.4,65 806.2,65" fill="url(#gFold)"/>
  <path d="M810.5 53.3 H832.5" stroke="#f4e8a0" stroke-width="0.8"/>
</g>
<!-- question mark -->
<g>
  <path d="M857 47.3 Q856.6 39.6 863.4 39.6 Q870.4 39.6 870.4 45.4 Q870.4 49.4 862.4 51.6 Q856.6 53.4 857 56.6 Q857.6 59.8 863.2 59.4 Q868.2 58.8 870.2 55" fill="none" stroke="#a89c8c" stroke-width="3.4" stroke-linecap="round" opacity="0.6" transform="translate(1 1)" filter="url(#tblur05)"/>
  <path d="M857 47.3 Q856.6 39.6 863.4 39.6 Q870.4 39.6 870.4 45.4 Q870.4 49.4 862.4 51.6 Q856.6 53.4 857 56.6 Q857.6 59.8 863.2 59.4 Q868.2 58.8 870.2 55" fill="none" stroke="#2a8a48" stroke-width="3.1" stroke-linecap="round"/>
  <path d="M857 47.3 Q856.6 39.6 863.4 39.6 Q870.4 39.6 870.4 45.4 Q870.4 49.4 862.4 51.6 Q856.6 53.4 857 56.6 Q857.6 59.8 863.2 59.4 Q868.2 58.8 870.2 55" fill="none" stroke="#6cba7c" stroke-width="1" stroke-linecap="round" opacity="0.7"/>
  <circle cx="863.2" cy="65.2" r="2" fill="#a89c8c" opacity="0.5"/>
  <circle cx="862.4" cy="64.3" r="1.8" fill="#187838"/>
</g>
<!-- blue check -->
<g>
  <path d="M893.2 51.3 L901.8 60.3 L919 37.6 L903.6 66.6 Q902 69.2 900.4 66.8 Z" fill="#60544c" opacity="0.45" filter="url(#tblur05)" transform="translate(1.3 0.8)"/>
  <path d="M893.2 51.3 L901.8 60.3 L919 37.6 L903.6 66.6 Q902 69.2 900.4 66.8 Z" fill="url(#gChk)"/>
</g>
</svg>
<!--/TB-->
<div id="frame"></div>
</body>
</html>
